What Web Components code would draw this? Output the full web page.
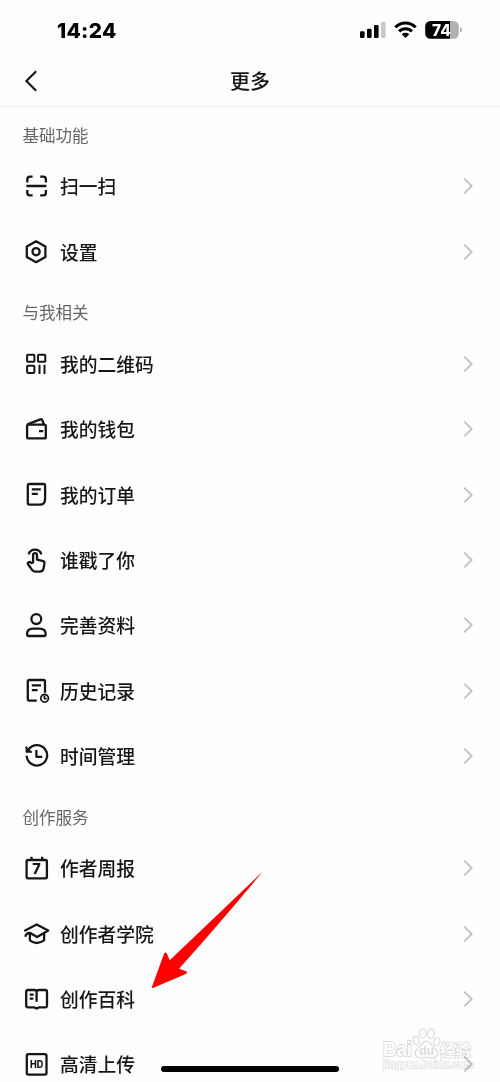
<!DOCTYPE html>
<html lang="zh-CN">
<head>
<meta charset="UTF-8">
<title>更多</title>
<style>
  html, body {
    margin: 0;
    background: #fefefe;
  }

  body {
    width: 500px;
    height: 1082px;
    overflow: hidden;
    color: #161616;
    font-family: "Noto Sans CJK SC", sans-serif;
  }
</style>
</head>
<body>
<more-page>
  <menu-section title="基础功能">
    <menu-item icon="scan">扫一扫</menu-item>
    <menu-item icon="settings">设置</menu-item>
  </menu-section>
  <menu-section title="与我相关">
    <menu-item icon="qrcode">我的二维码</menu-item>
    <menu-item icon="wallet">我的钱包</menu-item>
    <menu-item icon="order">我的订单</menu-item>
    <menu-item icon="poke">谁戳了你</menu-item>
    <menu-item icon="profile">完善资料</menu-item>
    <menu-item icon="history">历史记录</menu-item>
    <menu-item icon="clock">时间管理</menu-item>
  </menu-section>
  <menu-section title="创作服务">
    <menu-item icon="calendar">作者周报</menu-item>
    <menu-item icon="academy">创作者学院</menu-item>
    <menu-item icon="book">创作百科</menu-item>
    <menu-item icon="hd">高清上传</menu-item>
  </menu-section>
</more-page>

<script>
// 图标，统一 28x28 画布
const ICONS = {
  scan: `
    <path d="M5.3 10.5V7.3q0-2.7 2.7-2.7h2.6M18.2 4.6h3q2.7 0 2.7 2.7v3.2M5.3 18v2.7q0 2.7 2.7 2.7h2.6M18.2 23.4h3q2.7 0 2.7-2.7V18M4.4 14h20"/>`,
  settings: `
    <path d="M14.1 3.3 23.4 8.6v10.3l-9.3 5.3-9.3-5.3V8.6z"/>
    <circle cx="14.1" cy="13.7" r="3.6"/>`,
  qrcode: `
    <g stroke-width="2">
      <rect x="5.1" y="4.7" width="7.3" height="7.1" rx=".8"/>
      <rect x="16" y="4.7" width="7.3" height="7.1" rx=".8"/>
      <rect x="5.1" y="15.8" width="7.3" height="7.1" rx=".8"/>
      <path d="M17.5 14.8V24M22.5 14.8V24"/>
    </g>`,
  wallet: `
    <rect x="5.1" y="9.6" width="18.7" height="13.8" rx="1.5"/>
    <path d="M5.4 9.4 18.4 4.4q1.4-.5 1.9.8l1.5 4.2M17 16.2h4.2"/>`,
  order: `
    <path d="M7.4 3h14.1q1.6 0 1.6 1.6V18q0 5.7-5.5 5.7H7.4q-1.6 0-1.6-1.6V4.6Q5.8 3 7.4 3z"/>
    <path d="M9.8 8.3h9M9.8 12.8h6"/>`,
  poke: `
    <path d="M6.6 8.4a6.7 6.7 0 0 1 12.8 0"/>
    <path d="M11.1 16.6V9a1.95 1.95 0 0 1 3.9 0v4.6l5.4 1.2q2.3.5 2 2.7l-.7 4.3q-.6 3.9-4.3 3.9h-3.8q-2.1 0-3.4-1.6l-4-5.6q-.9-1.4.4-2.3 1.4-.8 2.4.6z"/>`,
  profile: `
    <circle cx="14.3" cy="8.1" r="4.9"/>
    <path d="M11.4 17.6h5.8q6.4 0 6.4 5.2v1q0 1.2-1.2 1.2H6.3q-1.2 0-1.2-1.2v-1q0-5.2 6.3-5.2z"/>`,
  history: `
    <path d="M14.8 23.6H7.3q-1.5 0-1.5-1.5V4.5Q5.8 3 7.3 3h14.2Q23 3 23 4.5v11.2M9.8 8.4h9.2M9.8 13.2h5.8"/>
    <g stroke-width="1.8"><circle cx="22.6" cy="21.3" r="3.8"/><path d="M22.4 19.1v2.5h2.2"/></g>`,
  clock: `
    <path d="M6.6 7.4A10.2 10.2 0 1 1 4.7 13.8M14.4 7.9v6.9h5.8"/>
    <path d="M4 4.4v5.9h6z" fill="currentColor" stroke-width=".9"/>`,
  calendar: `
    <rect x="4.6" y="6" width="20.3" height="18.4" rx="1.6"/>
    <path d="M9.5 2.7v3.5M20.2 2.7v3.5"/>
    <text x="14.5" y="20.4" font-size="14.5">7</text>`,
  academy: `
    <path d="M2.3 10.9 14.6 4.5l11.6 6.1-11.1 6.4-6.9-4q-4.2-.2-4.9 3.8"/>
    <path d="M7.9 13.1v7.3q6.6 5.2 14.2 0v-7"/>`,
  book: `
    <path d="M14.6 16.8V7.2q0-2.2-2.2-2.2H6q-1.8 0-1.8 1.8v13.8q0 1.8 1.8 1.8h6.4l2.2 1.2 2.2-1.2h6.4q1.8 0 1.8-1.8V6.8q0-1.8-1.8-1.8h-6.4q-2.2 0-2.2 2.2M7.7 9.6h4M7.7 13.7h3.6"/>`,
  hd: `
    <rect x="4.8" y="4.1" width="19.7" height="20.5" rx="1.6"/>
    <text x="14.6" y="18" font-size="10" textLength="13.4" lengthAdjust="spacingAndGlyphs">HD</text>`
};

class StatusBar extends HTMLElement {
  constructor() {
    super();
    this.attachShadow({ mode: 'open' }).innerHTML = `
      <style>
        :host {
          display: flex;
          justify-content: space-between;
          align-items: center;
          box-sizing: border-box;
          height: 60px;
          padding: 0 38px 0 57px;
          color: #000;
          font: 800 20.8px/60px Inter, sans-serif;
        }
        .time { padding-top: 1px; letter-spacing: .3px; }
        svg { display: block; overflow: visible; }
      </style>
      <span class="time">14:24</span>
      <svg width="102" height="60" viewBox="360 0 102 60">
        <rect x="360" y="31.3" width="4.6" height="6.6" rx="1.2"/>
        <rect x="367" y="28.7" width="4.6" height="9.2" rx="1.2"/>
        <rect x="374" y="25" width="4.6" height="12.9" rx="1.2"/>
        <rect x="381" y="21.7" width="4.6" height="16.2" rx="1.2" fill="#c9c9c9"/>
        <g fill="none" stroke="#000" stroke-width="3">
          <path d="M395.3 27.2a14.4 14.4 0 0 1 20.4 0"/>
          <path d="M399.1 31.4a9 9 0 0 1 12.8 0"/>
        </g>
        <path d="M405.5 38 401.7 34.3a5.6 5.6 0 0 1 7.6 0z"/>
        <clipPath id="cell"><rect x="425.2" y="21" width="33.6" height="17.8" rx="5.2"/></clipPath>
        <g clip-path="url(#cell)">
          <rect x="425" y="20" width="25" height="20"/>
          <rect x="450" y="20" width="10" height="20" fill="#b1b1b1"/>
        </g>
        <path d="M460 27.3q2.1.8 2.1 2.6T460 32.5z" fill="#b1b1b1"/>
        <text x="441.4" y="35.5" fill="#fff" text-anchor="middle" style="font:800 15.4px/1 Inter,sans-serif">74</text>
      </svg>
    `;
  }
}

class NavBar extends HTMLElement {
  constructor() {
    super();
    this.attachShadow({ mode: 'open' }).innerHTML = `
      <style>
        :host {
          display: grid;
          grid-template-columns: 60px 1fr 60px;
          align-items: center;
          box-sizing: border-box;
          height: 47px;
          padding-bottom: 5px;
          border-bottom: 1px solid #efefef;
          font-size: 20px;
          font-weight: 500;
          line-height: 41px;
          text-align: center;
        }
        svg { display: block; margin-left: 22px; }
      </style>
      <svg width="20" height="24" viewBox="0 0 20 24" fill="none" stroke="#161616" stroke-width="2.1">
        <path d="M14.2 2.2 4.4 12l9.8 9.8"/>
      </svg>
      <span><slot></slot></span>
    `;
  }
}

class MenuSection extends HTMLElement {
  connectedCallback() {
    this.attachShadow({ mode: 'open' }).innerHTML = `
      <style>
        :host { display: block; }
        .title {
          box-sizing: border-box;
          height: 46.6px;
          padding: 8px 22.5px 0;
          color: #666;
          font-size: 16.5px;
          line-height: 40px;
        }
      </style>
      <div class="title">${this.getAttribute('title')}</div>
      <slot></slot>
    `;
    // 避免原生 tooltip
    this.removeAttribute('title');
  }
}

class MenuItem extends HTMLElement {
  connectedCallback() {
    this.attachShadow({ mode: 'open' }).innerHTML = `
      <style>
        :host {
          display: flex;
          align-items: center;
          gap: 10px;
          box-sizing: border-box;
          height: 65.42px;
          padding: 0 26px 0 22px;
          font-size: 18.75px;
          font-weight: 500;
          line-height: 30px;
        }
        svg { display: block; flex: none; }
        .icon { stroke-linejoin: round; }
        .icon text {
          fill: currentColor;
          stroke: none;
          font-family: Inter, sans-serif;
          font-weight: 800;
          text-anchor: middle;
        }
        .label { flex: 1; }
      </style>
      <svg class="icon" width="28" height="28" viewBox="0 0 28 28"
        fill="none" stroke="currentColor" stroke-width="2.3">${ICONS[this.getAttribute('icon')]}</svg>
      <span class="label"><slot></slot></span>
      <svg width="12" height="20" viewBox="0 0 12 20" fill="none" stroke="#c2c2c2" stroke-width="1.9">
        <path d="M2.3 2.6 9.7 10l-7.4 7.4"/>
      </svg>
    `;
  }
}

// 指向"创作百科"的红色箭头
class PointerArrow extends HTMLElement {
  constructor() {
    super();
    this.attachShadow({ mode: 'open' }).innerHTML = `
      <style>
        :host { display: block; position: absolute; left: 140px; top: 860px; }
        svg { display: block; }
      </style>
      <svg width="135" height="140" viewBox="0 0 135 140" fill="#fe0000">
        <path d="M123 11.3Q80 63 39 108.8l7.3 2.5q1.4 1.3 0 2.5L13 128q-1.4.2-.9-1.4L24.2 93.2q1.3-1.5 2.6 0l2.9 7.1Q72 60 123 11.3z"/>
      </svg>
    `;
  }
}

class SiteWatermark extends HTMLElement {
  constructor() {
    super();
    this.attachShadow({ mode: 'open' }).innerHTML = `
      <style>
        :host { display: block; position: absolute; left: 380px; top: 1024px; mix-blend-mode: multiply; }
        svg { display: block; overflow: visible; }
        text { font-family: "Liberation Sans", "Noto Sans CJK SC", sans-serif; font-weight: 700; paint-order: stroke; }
      </style>
      <svg width="96" height="52" viewBox="0 0 96 52" fill="#fefefe" stroke="#dcdcdc" stroke-width="1.2">
        <ellipse cx="36.2" cy="16.6" rx="3" ry="4.3" transform="rotate(-15 36.2 16.6)"/>
        <ellipse cx="42.6" cy="9.3" rx="3.4" ry="4.8"/>
        <ellipse cx="51" cy="9.6" rx="3.4" ry="4.8" transform="rotate(10 51 9.6)"/>
        <ellipse cx="56.9" cy="17.8" rx="3" ry="4.3" transform="rotate(18 56.9 17.8)"/>
        <path d="M46.3 17.2q2.6 0 5 3.5l5 5.1q2.3 3 .6 5.8t-5.8 2.1q-4.8-.9-9.6 0-4.5.6-5.9-2.3-1.4-3.1 1-5.8l4.8-5q2.2-3.4 4.9-3.4z"/>
        <text x="3" y="31.5" font-size="20" stroke-width="1.8" textLength="29" lengthAdjust="spacingAndGlyphs">Bai</text>
        <text x="39.3" y="31.2" font-size="12" fill="#dcdcdc" stroke="none">du</text>
        <text x="60" y="31.5" font-size="15.5" stroke-width="1.6">经验</text>
        <text x="3" y="44" font-size="10.3" stroke="#e2e2e2" stroke-width="1.5">jingyan.baidu.com</text>
      </svg>
    `;
  }
}

class MorePage extends HTMLElement {
  constructor() {
    super();
    this.attachShadow({ mode: 'open' }).innerHTML = `
      <style>
        :host {
          display: flex;
          flex-direction: column;
          position: relative;
          width: 500px;
          height: 1082px;
          overflow: hidden;
        }
        .home-indicator {
          position: absolute;
          left: 161px;
          bottom: 10px;
          width: 178px;
          height: 6px;
          border-radius: 3px;
          background: #000;
        }
      </style>
      <status-bar></status-bar>
      <nav-bar>更多</nav-bar>
      <main><slot></slot></main>
      <site-watermark></site-watermark>
      <pointer-arrow></pointer-arrow>
      <div class="home-indicator"></div>
    `;
  }
}

// 注册 Custom Elements
customElements.define('status-bar', StatusBar);
customElements.define('nav-bar', NavBar);
customElements.define('menu-section', MenuSection);
customElements.define('menu-item', MenuItem);
customElements.define('pointer-arrow', PointerArrow);
customElements.define('site-watermark', SiteWatermark);
customElements.define('more-page', MorePage);
</script>
</body>
</html>
